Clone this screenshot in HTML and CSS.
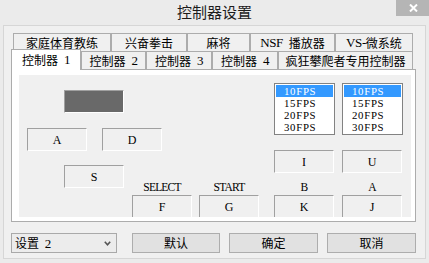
FILE: index.html
```html
<!DOCTYPE html>
<html>
<head>
<meta charset="utf-8">
<link rel="stylesheet" href="styles.css">
</head>
<body>
<div class="titlebar">
  <span class="title">控制器设置</span>
  <span class="close"><svg width="9" height="8" viewBox="0 0 9 8"><path d="M1 0.5 L8 7.5 M8 0.5 L1 7.5" stroke="#fff" stroke-width="2" fill="none"/></svg></span>
</div>
<div class="client">
  <div class="tabrow row1">
    <div class="tab t98">家庭体育教练</div>
    <div class="tab t76">兴奋拳击</div>
    <div class="tab t63">麻将</div>
    <div class="tab t85"><span class="l">NSF </span>播放器</div>
    <div class="tab t78"><span class="l">VS-</span>微系统</div>
  </div>
  <div class="tabrow row2">
    <div class="tab sel">控制器<span class="l"> 1</span></div>
    <div class="tab t65">控制器<span class="l"> 2</span></div>
    <div class="tab t66">控制器<span class="l"> 3</span></div>
    <div class="tab t66">控制器<span class="l"> 4</span></div>
    <div class="tab t135">疯狂攀爬者专用控制器</div>
  </div>
  <div class="panel">
    <div class="inner">
      <div class="pad">
        <div class="box dark"></div>
        <div class="box ka">A</div>
        <div class="box kd">D</div>
        <div class="box ks">S</div>
        <div class="lab lsel">SELECT</div>
        <div class="box kf">F</div>
        <div class="lab lstart">START</div>
        <div class="box kg">G</div>
      </div>
      <div class="right">
        <div class="rcol">
          <div class="list">
            <div class="opt on">10FPS</div>
            <div class="opt">15FPS</div>
            <div class="opt">20FPS</div>
            <div class="opt">30FPS</div>
          </div>
          <div class="box b1">I</div>
          <div class="lab rlab">B</div>
          <div class="box">K</div>
        </div>
        <div class="rcol">
          <div class="list">
            <div class="opt on">10FPS</div>
            <div class="opt">15FPS</div>
            <div class="opt">20FPS</div>
            <div class="opt">30FPS</div>
          </div>
          <div class="box b1">U</div>
          <div class="lab rlab">A</div>
          <div class="box">J</div>
        </div>
      </div>
    </div>
  </div>
  <div class="bottom">
    <div class="select"><span>设置<span class="l"> 2</span></span><svg width="7" height="5" viewBox="0 0 7 5"><path d="M0.8 0.8 L3.5 3.8 L6.2 0.8" stroke="#555" stroke-width="1.6" fill="none"/></svg></div>
    <div class="btn w88">默认</div>
    <div class="btn w89">确定</div>
    <div class="btn w89">取消</div>
  </div>
</div>
</body>
</html>
```
FILE: styles.css
```css
* { box-sizing: border-box; margin: 0; padding: 0; }
html, body { width: 429px; height: 263px; overflow: hidden; }
body {
  background: #ebebeb;
  font-family: "Noto Sans CJK SC", "Liberation Serif", sans-serif;
  font-size: 12px;
  line-height: 16px;
  color: #000;
}
.l { font-family: "Liberation Serif", serif; font-size: 13px; letter-spacing: -0.4px; word-spacing: 3px; white-space: pre; }

.titlebar { height: 25px; position: relative; display: flex; justify-content: center; align-items: center; }
.title { font-size: 15px; line-height: 20px; color: #1c1c1c; margin-top: -2px; }
.close { position: absolute; top: 0; right: 0; width: 33px; height: 16px; background: #b5b5b5; display: flex; align-items: center; justify-content: center; padding-left: 1px; }

.client {
  margin-left: 3px; width: 423px; height: 234px;
  border: 1px solid #d6d6d6; background: #f0f0f0;
  padding: 7px 0 0 7px;
}

.tabrow { display: flex; height: 18px; }
.row1 { margin-left: 2px; }
.tab {
  height: 18px; border: 1px solid #acacac; border-bottom: none;
  background: #f0f0f0; display: flex; align-items: center; justify-content: center;
  white-space: nowrap;
}
.t98 { width: 98px; } .t76 { width: 76px; } .t63 { width: 63px; } .t85 { width: 85px; } .t78 { width: 78px; }
.t65 { width: 65px; } .t66 { width: 66px; } .t135 { width: 135px; }
.tab.sel { width: 70px; height: 21px; margin-top: -2px; background: #fff; position: relative; z-index: 1; padding-bottom: 1px; }

.panel {
  width: 405px; height: 153px; border: 1px solid #acacac; background: #fff;
  padding: 5px 4px 4px 7px;
}
.inner {
  width: 392px; height: 142px; background: #f0f0f0; overflow: hidden;
  display: flex; align-items: flex-start;
}

.pad {
  width: 240px; flex: none;
  display: grid;
  grid-template-columns: 8px 37px 23px 15px 22px 8px 30px 30px 7px 60px;
  grid-template-rows: 15px 23px 15px 23px 14px 13px 10px 7px 23px;
}
.box {
  height: 23px; border: 1px solid; border-color: #a0a0a0 #fff #fff #a0a0a0;
  display: flex; align-items: center; justify-content: center;
  font-family: "Liberation Serif", serif; font-size: 12px; line-height: 14px;
}
.dark { background: #696969; grid-column: 3 / 6; grid-row: 2 / 3; }
.ka { grid-column: 2 / 4; grid-row: 4 / 5; }
.kd { grid-column: 5 / 8; grid-row: 4 / 5; }
.ks { grid-column: 3 / 6; grid-row: 6 / 8; }
.kf { grid-column: 7 / 9; grid-row: 9 / 10; }
.kg { grid-column: 10 / 11; grid-row: 9 / 10; }
.lab {
  height: 12px; line-height: 12px; text-align: center; margin-bottom: 2px;
  font-family: "Liberation Serif", serif; font-size: 11.5px; letter-spacing: -0.8px;
}
.lsel { grid-column: 7 / 9; grid-row: 7 / 9; align-self: end; }
.lstart { grid-column: 10 / 11; grid-row: 7 / 9; align-self: end; }

.right { display: flex; gap: 7px; margin-left: 15px; }
.rcol { display: flex; flex-direction: column; width: 61px; }
.rcol .box { width: 60px; }
.rcol .b1 { margin-top: 15px; }
.rlab { width: 60px; margin-top: 8px; }
.list {
  width: 61px; height: 52px; margin-top: 8px;
  border: 1px solid #828282; background: #fff; padding: 1px;
}
.opt {
  height: 12px; line-height: 12px; padding-left: 8px;
  font-family: "Liberation Serif", serif; font-size: 10.8px; letter-spacing: 0.7px;
}
.opt.on { background: #3399ff; color: #fff; }

.bottom { display: flex; margin-top: 11px; height: 20px; }
.select {
  width: 106px; height: 20px; border: 1px solid #a9a9a9; background: #ececec;
  display: flex; align-items: center; justify-content: space-between;
  padding: 0 5px 0 3px;
}
.btn {
  height: 20px; border: 1px solid #adadad; background: #e1e1e1;
  display: flex; align-items: center; justify-content: center; margin-left: 9px;
}
.w88 { width: 88px; margin-left: 15px; }
.w89 { width: 89px; }
```
